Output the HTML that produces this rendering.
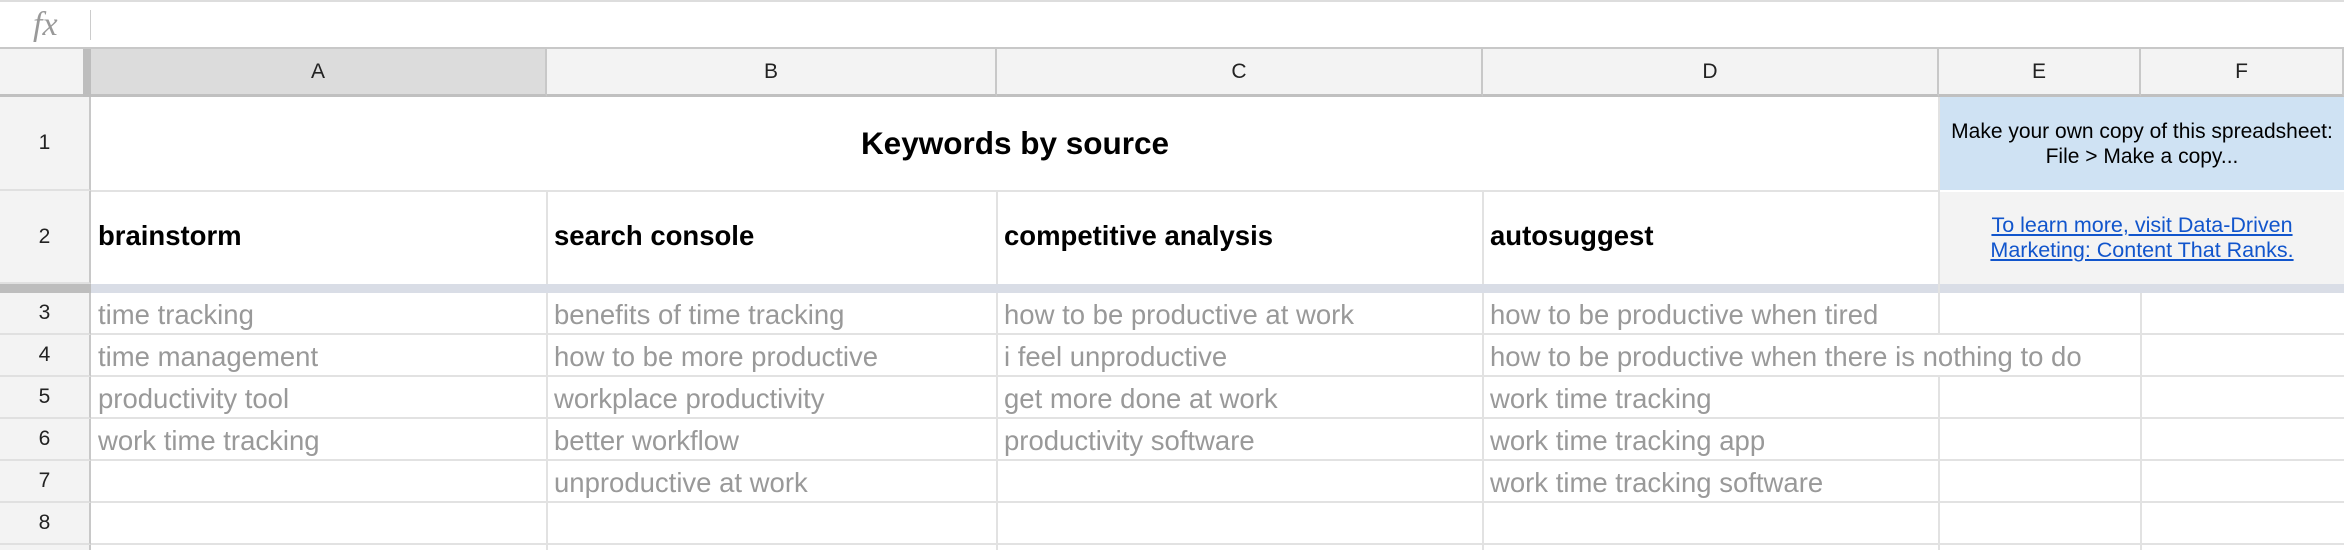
<!DOCTYPE html>
<html style="overflow:hidden;height:550px"><head><meta charset="utf-8"><style>
*{margin:0;padding:0;box-sizing:border-box}
body{width:2344px;height:550px;overflow:hidden;background:#fff;font-family:"Liberation Sans",Arial,sans-serif;position:relative}
.a{position:absolute}
.hl{position:absolute;height:2px;background:#e2e2e2}
.vl{position:absolute;width:2px;background:#e2e2e2}
.ch{position:absolute;top:49px;height:48px;background:#f3f3f3;border-right:2px solid #c8c8c8;border-bottom:3px solid #c0c0c0;font-size:21px;color:#222;display:flex;align-items:center;justify-content:center}
.rh{position:absolute;left:0;width:91px;background:#f3f3f3;border-right:2px solid #c8c8c8;border-bottom:2px solid #e0e0e0;font-size:21px;color:#222;display:flex;align-items:center;justify-content:center}
.t{position:absolute;font-size:27.5px;color:#999;white-space:nowrap;line-height:42px}
.b{position:absolute;font-size:27.5px;font-weight:bold;color:#000;white-space:nowrap}
</style></head><body>
<div class="a" style="left:0;top:0;width:2344px;height:2px;background:#ddd"></div>
<div class="a" style="left:33px;top:6px;font-family:'Liberation Serif',serif;font-style:italic;font-size:34px;color:#999">fx</div>
<div class="a" style="left:90px;top:10px;width:1px;height:30px;background:#ccc"></div>
<div class="a" style="left:0;top:47px;width:2344px;height:2px;background:#c8c8c8"></div>
<div class="ch" style="left:0;width:91px;border-right:none"></div>
<div class="a" style="left:83px;top:49px;width:8px;height:48px;background:#bdbdbd"></div>
<div class="ch" style="left:91px;width:456px;background:#dcdcdc">A</div>
<div class="ch" style="left:547px;width:450px">B</div>
<div class="ch" style="left:997px;width:486px">C</div>
<div class="ch" style="left:1483px;width:456px">D</div>
<div class="ch" style="left:1939px;width:202px">E</div>
<div class="ch" style="left:2141px;width:203px">F</div>
<div class="rh" style="top:97px;height:94px">1</div>
<div class="rh" style="top:191px;height:93px">2</div>
<div class="a" style="left:0;top:284px;width:91px;height:9px;background:#bdbdbd"></div>
<div class="a" style="left:91px;top:284px;width:2253px;height:9px;background:#d9dde6"></div>
<div class="rh" style="top:293px;height:42px">3</div>
<div class="rh" style="top:335px;height:42px">4</div>
<div class="rh" style="top:377px;height:42px">5</div>
<div class="rh" style="top:419px;height:42px">6</div>
<div class="rh" style="top:461px;height:42px">7</div>
<div class="rh" style="top:503px;height:42px">8</div>
<div class="rh" style="top:545px;height:5px;border-bottom:none"></div>
<div class="hl" style="left:91px;top:190px;width:1848px"></div>
<div class="vl" style="left:546px;top:191px;height:93px"></div>
<div class="vl" style="left:996px;top:191px;height:93px"></div>
<div class="vl" style="left:1482px;top:191px;height:93px"></div>
<div class="vl" style="left:1938px;top:97px;height:196px"></div>
<div class="hl" style="left:91px;top:333px;width:2253px"></div>
<div class="hl" style="left:91px;top:375px;width:2253px"></div>
<div class="hl" style="left:91px;top:417px;width:2253px"></div>
<div class="hl" style="left:91px;top:459px;width:2253px"></div>
<div class="hl" style="left:91px;top:501px;width:2253px"></div>
<div class="hl" style="left:91px;top:543px;width:2253px"></div>
<div class="vl" style="left:546px;top:293px;height:257px"></div>
<div class="vl" style="left:996px;top:293px;height:257px"></div>
<div class="vl" style="left:1482px;top:293px;height:257px"></div>
<div class="vl" style="left:1938px;top:293px;height:42px"></div>
<div class="vl" style="left:1938px;top:377px;height:173px"></div>
<div class="vl" style="left:2140px;top:293px;height:257px"></div>
<div class="a" style="left:1940px;top:97px;width:404px;height:93px;background:#cfe2f3;display:flex;align-items:center;justify-content:center;text-align:center;font-size:21px;line-height:25px;color:#000;white-space:nowrap">Make your own copy of this spreadsheet:<br>File &gt; Make a copy...</div>
<div class="a" style="left:1940px;top:192px;width:404px;height:92px;background:#f3f3f3;display:flex;align-items:center;justify-content:center;text-align:center;font-size:21.5px;line-height:25px;color:#1155cc;text-decoration:underline;white-space:nowrap">To learn more, visit Data-Driven<br>Marketing: Content That Ranks.</div>
<div class="b" style="left:91px;width:1848px;top:125px;text-align:center;font-size:31.5px">Keywords by source</div>
<div class="b" style="left:98px;top:220px">brainstorm</div>
<div class="b" style="left:554px;top:220px">search console</div>
<div class="b" style="left:1004px;top:220px">competitive analysis</div>
<div class="b" style="left:1490px;top:220px">autosuggest</div>
<div class="t" style="left:98px;top:294px">time tracking</div>
<div class="t" style="left:98px;top:336px">time management</div>
<div class="t" style="left:98px;top:378px">productivity tool</div>
<div class="t" style="left:98px;top:420px">work time tracking</div>
<div class="t" style="left:554px;top:294px">benefits of time tracking</div>
<div class="t" style="left:554px;top:336px">how to be more productive</div>
<div class="t" style="left:554px;top:378px">workplace productivity</div>
<div class="t" style="left:554px;top:420px">better workflow</div>
<div class="t" style="left:554px;top:462px">unproductive at work</div>
<div class="t" style="left:1004px;top:294px">how to be productive at work</div>
<div class="t" style="left:1004px;top:336px">i feel unproductive</div>
<div class="t" style="left:1004px;top:378px">get more done at work</div>
<div class="t" style="left:1004px;top:420px">productivity software</div>
<div class="t" style="left:1490px;top:294px">how to be productive when tired</div>
<div class="t" style="left:1490px;top:336px">how to be productive when there is nothing to do</div>
<div class="t" style="left:1490px;top:378px">work time tracking</div>
<div class="t" style="left:1490px;top:420px">work time tracking app</div>
<div class="t" style="left:1490px;top:462px">work time tracking software</div>
</body></html>
